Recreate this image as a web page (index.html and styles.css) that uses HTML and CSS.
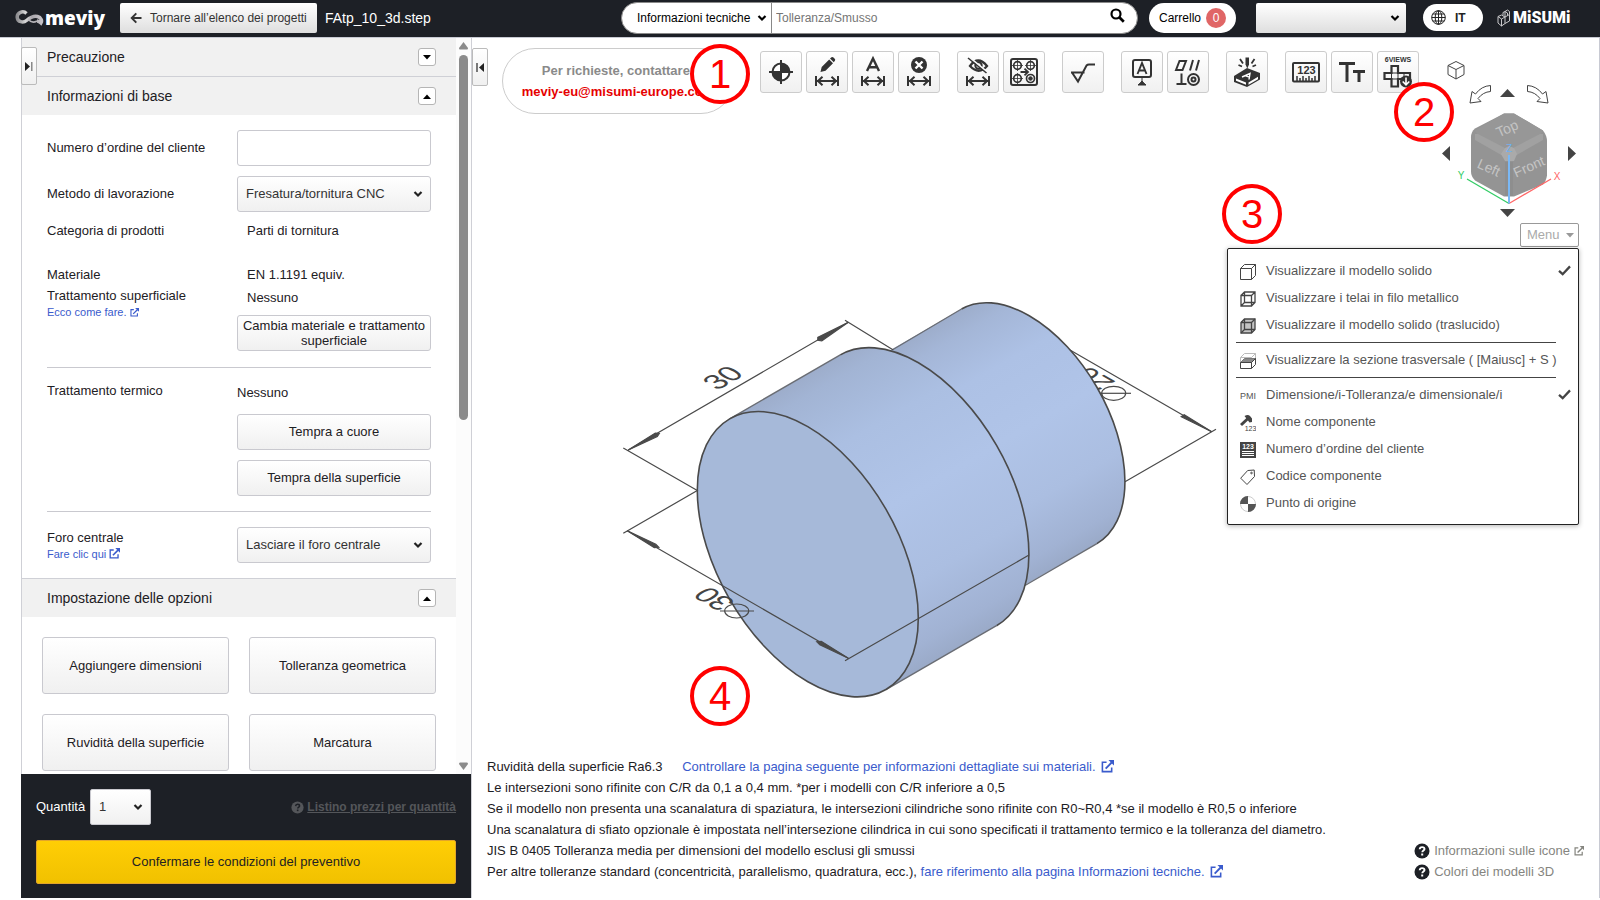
FILE: index.html
```html
<!DOCTYPE html>
<html lang="it">
<head>
<meta charset="utf-8">
<meta name="viewport" content="width=device-width, initial-scale=1">
<title>meviy - FAtp_10_3d.step</title>
<link rel="stylesheet" href="styles.css">
</head>
<body>
<svg class="defs" width="0" height="0" aria-hidden="true">
  <symbol id="chev" viewBox="0 0 10 8"><path d="M1.500 2 5 5.500 8.500 2" fill="none" stroke="currentColor" stroke-width="2.200"/></symbol>
  <symbol id="ext" viewBox="0 0 14 14"><path d="M6 2.500H1.500v10h10V8" fill="none" stroke="currentColor" stroke-width="1.700"/><path d="M5 9.200 11.500 2.700" stroke="currentColor" stroke-width="2"/><path d="M8 0h6v6z" fill="currentColor"/></symbol>
  <symbol id="help" viewBox="0 0 16 16"><circle cx="8" cy="8" r="7.500" fill="currentColor"/><path d="M5.700 6.300c.1-1.500 1.100-2.200 2.400-2.200s2.400.8 2.400 2c0 1.500-2.200 1.500-2.200 3.200" fill="none" stroke="var(--q,#fff)" stroke-width="1.900"/><path d="M7.200 10.500h2v2h-2z" fill="var(--q,#fff)"/></symbol>
  <symbol id="dim" viewBox="0 0 26 12"><path d="M2 1v10M24 1v10M3 6h20M8.500 1.800 4 6l4.500 4.200M17.500 1.800 22 6l-4.500 4.200" fill="none" stroke="currentColor" stroke-width="2"/></symbol>
  <symbol id="check" viewBox="0 0 14 12"><path d="M1 6.500 5 10 13 1.500" fill="none" stroke="currentColor" stroke-width="2.500"/></symbol>
</svg>

<header class="topbar">
  <a class="brand" href="#" aria-label="meviy">
    <svg width="30" height="18" viewBox="0 0 30 18"><defs><linearGradient id="lg" x1="0" x2="1"><stop offset="0" stop-color="#8f8f92"/><stop offset=".35" stop-color="#d8d8d8"/><stop offset=".6" stop-color="#a9a6ac"/><stop offset="1" stop-color="#c4c1c6"/></linearGradient></defs><path d="M11.500 4.500C8 1 1.800 3.500 2.200 8.500c.4 4.500 6 5.700 9.300 3C14.500 9 18.500 6.500 22.500 7.500c3.500 1 5 4 3.500 6.500-1.500-1.500-2.500-2-4-2" fill="none" stroke="url(#lg)" stroke-width="3.400"/><path d="M13.500 10.500c2 2.500 5 3.500 8.500 1.500" fill="none" stroke="#b4b2b6" stroke-width="1.600"/></svg>
    <span>meviy</span>
  </a>
  <button class="back" type="button"><svg width="12" height="12" viewBox="0 0 12 12"><path d="M11.500 6H2M6.300 1.300 1.700 6l4.600 4.700" fill="none" stroke="currentColor" stroke-width="1.900"/></svg>Tornare all’elenco dei progetti</button>
  <span class="filename">FAtp_10_3d.step</span>
  <form class="search">
    <span class="search-kind"><select aria-label="Tipo di ricerca"><option>Informazioni tecniche</option></select><svg class="chev" width="10" height="8"><use href="#chev"/></svg></span>
    <input type="text" aria-label="Cerca" placeholder="Tolleranza/Smusso">
    <button type="button" aria-label="Cerca"><svg width="15" height="15" viewBox="0 0 15 15"><circle cx="6" cy="6" r="4.500" fill="none" stroke="currentColor" stroke-width="2.200"/><path d="m9.300 9.300 4.500 4.500" stroke="currentColor" stroke-width="2.700"/></svg></button>
  </form>
  <a class="cart" href="#">Carrello <b>0</b></a>
  <span class="account"><select aria-label="Account"><option></option></select><svg class="chev" width="10" height="8"><use href="#chev"/></svg></span>
  <button class="lang" type="button"><svg width="15" height="15" viewBox="0 0 15 15" fill="none" stroke="currentColor"><circle cx="7.500" cy="7.500" r="6.800"/><ellipse cx="7.500" cy="7.500" rx="3.300" ry="6.800"/><path d="M7.500.7v13.600M.7 7.500h13.600M1.800 4h11.400M1.800 11h11.400"/></svg>IT</button>
  <a class="misumi" href="#" aria-label="MiSUMi"><svg width="14" height="18" viewBox="0 0 14 18" fill="none" stroke="#c9c9cb"><path d="M1 7.500 4.500 6l3.500 2v6.500L4.500 17 1 14zM1 7.500 4.500 10v7M4.500 10 8 8M8 14.500l4.500-2.500V5.500L8 8M8 8V2.500L10.500 1l2 1.500v3M6 6.500V3.500l2-1M8 2.500l2.500 1.500v2.500"/></svg><span>MiSUMi</span></a>
</header>

<div class="workspace">
  <aside class="sidebar">
    <button class="handle handle-left" type="button" aria-label="Nascondi"><svg width="8" height="9" viewBox="0 0 8 9"><path d="M0 0v9l5-4.500z" fill="#222"/><path d="M6.800 0v9" stroke="#777" stroke-width="1.300"/></svg></button>
    <div class="scroll">
      <div class="panels">
        <section>
          <h2 class="sec-head"><span>Precauzione</span><button type="button" aria-label="Espandi"><svg width="8" height="5" viewBox="0 0 8 5"><path d="M0 0h8L4 4.500z"/></svg></button></h2>
        </section>
        <section>
          <h2 class="sec-head"><span>Informazioni di base</span><button type="button" aria-label="Comprimi"><svg width="8" height="5" viewBox="0 0 8 5"><path d="M0 5h8L4 .5z"/></svg></button></h2>
          <div class="sec-body">
            <div class="row">
              <label for="order">Numero d’ordine del cliente</label>
              <input class="field" id="order" type="text">
            </div>
            <div class="row">
              <label for="method">Metodo di lavorazione</label>
              <span class="select"><select id="method"><option>Fresatura/tornitura CNC</option></select><svg class="chev" width="10" height="8"><use href="#chev"/></svg></span>
            </div>
            <div class="row"><span>Categoria di prodotti</span><span class="value">Parti di tornitura</span></div>
            <div class="row material">
              <div class="stack"><span>Materiale</span><span class="gap-s">Trattamento superficiale</span><a class="small" href="#">Ecco come fare. <svg width="9" height="9"><use href="#ext"/></svg></a></div>
              <div class="stack"><span class="value">EN 1.1191 equiv.</span><span class="value gap-m">Nessuno</span><button class="btn tight" type="button">Cambia materiale e trattamento superficiale</button></div>
            </div>
            <hr>
            <div class="row heat">
              <span>Trattamento termico</span>
              <div class="stack btns"><span>Nessuno</span><button class="btn" type="button">Tempra a cuore</button><button class="btn" type="button">Tempra della superficie</button></div>
            </div>
            <hr>
            <div class="row hole">
              <div class="stack"><label for="hole">Foro centrale</label><a class="small" href="#">Fare clic qui <svg width="11" height="11"><use href="#ext"/></svg></a></div>
              <span class="select"><select id="hole"><option>Lasciare il foro centrale</option></select><svg class="chev" width="10" height="8"><use href="#chev"/></svg></span>
            </div>
          </div>
        </section>
        <section>
          <h2 class="sec-head"><span>Impostazione delle opzioni</span><button type="button" aria-label="Comprimi"><svg width="8" height="5" viewBox="0 0 8 5"><path d="M0 5h8L4 .5z"/></svg></button></h2>
          <div class="options">
            <button class="btn" type="button">Aggiungere dimensioni</button>
            <button class="btn" type="button">Tolleranza geometrica</button>
            <button class="btn" type="button">Ruvidità della superficie</button>
            <button class="btn" type="button">Marcatura</button>
          </div>
        </section>
      </div>
      <div class="scrollbar" aria-hidden="true">
        <svg width="9" height="8" viewBox="0 0 9 8"><path d="M4.500 0 9 6q0 1.500-1 1.500H1Q0 7.500 0 6z"/></svg>
        <span class="thumb"></span>
        <svg class="down" width="9" height="8" viewBox="0 0 9 8"><path d="M4.500 8 9 2Q9 .5 8 .5H1Q0 .5 0 2z"/></svg>
      </div>
    </div>
    <footer class="order">
      <div class="qty">
        <label for="qty">Quantità</label>
        <span class="select qty-select"><select id="qty"><option>1</option></select><svg class="chev" width="10" height="8"><use href="#chev"/></svg></span>
        <a href="#"><svg width="13" height="13"><use href="#help"/></svg><u>Listino prezzi per quantità</u></a>
      </div>
      <button class="confirm" type="button">Confermare le condizioni del preventivo</button>
    </footer>
  </aside>

  <main class="canvas">
    <svg class="model" width="630" height="430" viewBox="600 290 630 430" role="img" aria-label="Modello 3D">
      <defs>
        <linearGradient id="g1" gradientUnits="userSpaceOnUse" x1="729.700" y1="418.800" x2="885.900" y2="689.600"><stop offset="0" stop-color="#9dadcb"/><stop offset=".06" stop-color="#a2b4d4"/><stop offset=".25" stop-color="#abbfe2"/><stop offset=".5" stop-color="#b0c4e8"/><stop offset=".75" stop-color="#abbee1"/><stop offset=".93" stop-color="#a1b2d3"/><stop offset="1" stop-color="#9aaac8"/></linearGradient>
        <linearGradient id="g2" gradientUnits="userSpaceOnUse" x1="961.500" y1="309" x2="1096.900" y2="543.600"><stop offset="0" stop-color="#9dadcb"/><stop offset=".08" stop-color="#a4b6d7"/><stop offset=".25" stop-color="#adc1e5"/><stop offset=".5" stop-color="#b0c4e8"/><stop offset=".75" stop-color="#abbee1"/><stop offset=".93" stop-color="#a1b2d3"/><stop offset="1" stop-color="#9aaac8"/></linearGradient>
      </defs>
      <g class="ink">
        <path d="M1070 350 1211.700 431.700M1125 481.700 1216 429.300"/>
        <path class="fill" d="m1211.700 431.700-30.500-15 3-2z"/>
        <ellipse cx="1113.700" cy="393.300" rx="12" ry="7"/><path d="M1100 393.300h31"/>
      </g>
      <text class="dimtext" transform="matrix(-.866 -.5 .866 -.5 1094 379)" y="10">26</text>
      <path d="M850.700 373 961.500 309A135.400 78.200 60 0 1 1096.900 543.600L986.100 607.600z" fill="url(#g2)"/>
      <path class="edge" d="M961.500 309A135.400 78.200 60 0 1 1096.900 543.600"/>
      <path class="rim" d="M893 349.500 961.500 309M1025 585.500 1096.900 543.600"/>
      <path d="M729.700 418.800 840.300 354.900A156.300 90.200 60 0 1 996.500 625.700L885.900 689.600z" fill="url(#g1)"/>
      <path class="edge" d="M840.300 354.900A156.300 90.200 60 0 1 996.500 625.700"/>
      <path class="rim" d="M729.700 418.800 840.300 354.900M885.900 689.600 996.500 625.700"/>
      <ellipse class="edge face" cx="807.800" cy="554.200" rx="156.300" ry="90.200" transform="rotate(60 807.800 554.200)"/>
      <g class="ink">
        <path d="M628.300 450 848.300 322.300M623.300 448 697.300 490.500 623.300 533.300M845 320.300 893.300 350M627.300 530.700 848.300 658.300M845 660.700 1029 555"/>
        <path class="fill" d="m628.300 450 27-17 4 .5-2 3zM848.300 322.300l-30.500 15v3l4 .5zM627.300 530.700l27 17 4.500-.5-3-3zM848.300 658.300l-27-17-4.500.5 3 3z"/>
        <ellipse cx="736.700" cy="611" rx="12" ry="7"/><path d="M720 611h34"/>
      </g>
      <text class="dimtext" transform="matrix(.866 -.5 .866 .5 722.700 377.700)" y="10">30</text>
      <text class="dimtext" transform="matrix(-.866 -.5 .866 -.5 714 599)" y="10">30</text>
    </svg>

    <div class="canvas-top">
      <button class="handle" type="button" aria-label="Nascondi"><svg width="8" height="9" viewBox="0 0 8 9"><path d="M8 0v9L3 4.500z" fill="#222"/><path d="M1 0v9" stroke="#333" stroke-width="1.300"/></svg></button>
      <div class="contact"><span>Per richieste, contattare:</span><a href="#">meviy-eu@misumi-europe.com</a></div>
      <div class="toolbar">
        <div class="group">
          <button type="button" aria-label="Origine"><svg width="36" height="36" viewBox="0 0 36 36"><circle cx="18" cy="18" r="8.500" fill="#fff" stroke="#333" stroke-width="2"/><path d="M18 18V9.500A8.500 8.500 0 0 1 26.500 18zM18 18v8.500A8.500 8.500 0 0 1 9.500 18z"/><path d="M18 6v24M6 18h24" stroke="#333" stroke-width="2"/></svg></button>
          <button type="button" aria-label="Modifica quota"><svg width="36" height="36" viewBox="0 0 36 36"><path d="m11.500 18 1.200-5 7.500-7.500 3.800 3.800-7.500 7.500zM21 4.500l1.500-1.200q1-.7 2 .3l1.200 1.200q1 1 .2 2L24.800 8.300z"/><use href="#dim" x="5" y="21" width="26" height="12"/></svg></button>
          <button type="button" aria-label="Testo quota"><svg width="36" height="36" viewBox="0 0 36 36"><path d="M12 17 18 4.500 24 17M14.500 13.200h7" fill="none" stroke="#333" stroke-width="2.400"/><use href="#dim" x="5" y="21" width="26" height="12"/></svg></button>
          <button type="button" aria-label="Elimina quota"><svg width="36" height="36" viewBox="0 0 36 36"><circle cx="18" cy="11" r="8"/><path d="m14.500 7.500 7 7m0-7-7 7" stroke="#fff" stroke-width="2.400"/><use href="#dim" x="5" y="21" width="26" height="12"/></svg></button>
        </div>
        <div class="group">
          <button type="button" aria-label="Nascondi quota"><svg width="36" height="36" viewBox="0 0 36 36"><path d="M10 12q8-11 17 0-8 9.500-17 0z" fill="none" stroke="#333" stroke-width="2.300"/><circle cx="18.500" cy="11.500" r="3.200" fill="none" stroke="#333" stroke-width="2"/><path d="m9.500 3.500 17 14" stroke="#fafafa" stroke-width="2"/><path d="m8 4 18.500 15" stroke="#333" stroke-width="1.600"/><use href="#dim" x="5" y="21" width="26" height="12"/></svg></button>
          <button type="button" aria-label="Fori"><svg width="36" height="36" viewBox="0 0 36 36" fill="none" stroke="#333"><rect x="5" y="5" width="26" height="26" rx="2" stroke-width="2"/><g stroke-width="1.700"><circle cx="11.500" cy="11.500" r="3.800"/><circle cx="24.500" cy="11.500" r="3.800"/><circle cx="11.500" cy="24.500" r="3.800"/><circle cx="24.500" cy="24.500" r="4"/></g><path d="M11.500 6v11M6 11.500h11M24.500 6v11M19 11.500h11M11.500 19v11M6 24.500h11" stroke-width=".8"/><circle cx="24.500" cy="24.500" r="1.800" fill="#333"/><path d="M14.500 18h7M18.500 14.700 22 18l-3.500 3.300" stroke-width="1.800"/></svg></button>
        </div>
        <div class="group">
          <button type="button" aria-label="Rugosità"><svg width="36" height="36" viewBox="0 0 36 36"><path d="M6 18.500h13.500M7 18.500l6 9 8.500-16q1-1 2.500-1h6" fill="none" stroke="#333" stroke-width="2"/></svg></button>
        </div>
        <div class="group">
          <button type="button" aria-label="Riferimento"><svg width="36" height="36" viewBox="0 0 36 36"><rect x="9" y="6" width="18" height="17" rx="2" fill="none" stroke="#333" stroke-width="2"/><path d="m13.500 20 4.500-11 4.500 11M15 16.500h6" fill="none" stroke="#333" stroke-width="1.900"/><path d="M18 23v5M14 31q2-1.500 4-4 2 2.500 4 4z" stroke="#333"/></svg></button>
          <button type="button" aria-label="Tolleranza geometrica"><svg width="36" height="36" viewBox="0 0 36 36" fill="none" stroke="#333" stroke-width="2"><path d="m6 16 3.500-9H16l-3.500 9zM20 16.500 23 6M26 16.500 29 6M11.500 19.500v10M6.500 30h10"/><circle cx="23.500" cy="25.500" r="5.500"/><circle cx="23.500" cy="25.500" r="2"/></svg></button>
        </div>
        <div class="group">
          <button type="button" aria-label="Marcatura"><svg width="36" height="36" viewBox="0 0 36 36"><path d="m5 22 13-8 13 5v6.500L18 33 5 28z"/><path d="m7 24.500 10 4v2.300L7 26.800zM19.500 28.500l9.500-5.800v2.500l-9.500 5.500z" fill="#fff"/><path d="m13 23 8-3.500-1 6M16 21.600l5 1.700" fill="none" stroke="#fff" stroke-width="1.400"/><path d="M16.500 3.500h3.500v7l-1.700 4-1.800-4z"/><path d="m11 5 3 4.500M25.500 5l-3 4.500M9.500 11l3.500 1.500M27 11l-3.500 1.500" stroke="#333" stroke-width="1.800"/></svg></button>
        </div>
        <div class="group">
          <button type="button" aria-label="Misura"><svg width="36" height="36" viewBox="0 0 36 36"><rect x="5" y="9" width="26" height="18.500" rx="1" fill="none" stroke="#333" stroke-width="2"/><path d="M9 27v-5M12 27v-3M15 27v-5M18 27v-3M21 27v-5M24 27v-3M27 27v-5" stroke="#333" stroke-width="1.500"/><text x="18.500" y="20" font-size="11" font-weight="700" text-anchor="middle">123</text></svg></button>
          <button type="button" aria-label="Testo"><svg width="36" height="36" viewBox="0 0 36 36"><path d="M5 9.500h16M13 9.500V28M19 17.500h12M25 17.500V28" fill="none" stroke="#333" stroke-width="3"/></svg></button>
          <button type="button" aria-label="6 viste"><svg width="36" height="36" viewBox="0 0 36 36"><text x="18" y="8" font-size="7" font-weight="700" text-anchor="middle">6VIEWS</text><path d="M11.500 12h6.500v7h12v6h-12v7.500h-6.500V25h-7v-6h7z" fill="none" stroke="#333" stroke-width="2.200"/><path d="M11.500 19H18v6h-6.500zM24 19v6" fill="none" stroke="#333"/><circle cx="26" cy="27.500" r="6"/><path d="M26 23.500v6.500M22.700 27.500l3.300 3.300 3.300-3.300" fill="none" stroke="#fff" stroke-width="1.600"/></svg></button>
        </div>
      </div>
      <div class="view">
        <svg class="viewcube" width="150" height="165" viewBox="1440 55 150 165" role="img" aria-label="Cubo di orientamento">
          <g fill="none" stroke="#444"><path d="m1456 61.500 8 4v9l-8 4.500-8-4.500v-9zM1448 65.500l8 4 8-4M1456 69.500v9.500"/>
          <path d="M1490.500 85.500q-9 .5-15 8.500l-3.500-2.500-2 11.500 11-1.500-3-3q5-6.500 12.500-7zM1527.500 85.500q9 .5 15 8.500l3.500-2.500 2 11.500-11-1.500 3-3q-5-6.500-12.500-7z"/></g>
          <path fill="#444" d="M1500 97h15l-7.500-8zM1500 209h15l-7.500 8zM1450 146v15l-8-7.500zM1568 146v15l8-7.500z"/>
          <path fill="#949494" d="M1504 113.500h10l29 17q4 5 4 11v34q-1 6-4 9l-29 12h-10l-29-16q-4-4-4-9v-34q0-6 4-9z"/>
          <path fill="#979797" d="m1504 113.500h10l29 17-3 5-26 12-5-2-5 2-26-12-3-5z"/>
          <path fill="#a1a1a1" d="m1475 134 3 0 27 14-2 8-28-16zM1543 134l-3 0-27 14 2 8 28-16z"/>
          <path fill="#8e8e8e" d="M1505 162h8v34h-8z"/>
          <path fill="#aaa" d="m1505 148 4-2 5 2 3 6-3 7h-9l-4-7z"/>
          <g class="cubetext"><text transform="translate(1509 133) rotate(-24)">Top</text><text transform="translate(1487 172) rotate(24)">Left</text><text transform="translate(1531 171) rotate(-24)">Front</text></g>
          <g fill="none" stroke-width="1.300"><path stroke="#33cc66" d="m1509 203.500-42-24.500"/><path stroke="#f66" d="m1509 203.500 42-24.500"/><path stroke="#7ab8f5" stroke-width="2" d="M1509 203.500V155"/></g>
          <g class="axis"><text x="1461" y="179" fill="#33cc66">Y</text><text x="1557" y="180" fill="#f66">X</text><text x="1509" y="152" fill="#6fb1f3">Z</text></g>
        </svg>
        <div class="menu-wrap">
          <button class="menu-btn" type="button">Menu<svg width="8" height="5" viewBox="0 0 8 5"><path d="M0 0h8L4 4.500z" fill="#999"/></svg></button>
          <div class="menu">
            <button type="button"><svg width="16" height="16" viewBox="0 0 16 16"><path d="M.5 4.500h11v11H.5zM.5 4.500l4-4h11v11l-4 4M11.500 4.500l4-4"/></svg>Visualizzare il modello solido<svg class="tick" width="13" height="11"><use href="#check"/></svg></button>
            <button type="button"><svg width="16" height="16" viewBox="0 0 16 16"><path stroke-width="1.300" d="M1 4.500h10.500V15H1zM1 4.500 4.500 1H15v10.500L11.500 15M11.500 4.500 15 1M4.500 1v10.500H15M4.500 11.500 1 15"/></svg>Visualizzare i telai in filo metallico</button>
            <button type="button"><svg width="16" height="16" viewBox="0 0 16 16"><path fill="#c4c4c4" stroke-width="1.300" d="M1 4.500 4.500 1H15v10.500L11.500 15H1z"/><path stroke-width="1.300" d="M1 4.500h10.500V15M11.500 4.500 15 1M4.500 1v10.500H15M4.500 11.500 1 15"/></svg>Visualizzare il modello solido (traslucido)</button>
            <hr>
            <button type="button"><svg width="16" height="16" viewBox="0 0 16 16"><path stroke="#bbb" d="M.5 9V4.500l4-4h11v5M.5 4.500h11l4-4M11.500 4.500V9"/><path fill="#888" stroke="#777" d="m.5 9.500 4-4h11l-4 4z"/><path d="M.5 9.500h11v6H.5zM15.500 5.500v6l-4 4M11.500 9.500l4-4"/></svg>Visualizzare la sezione trasversale ( [Maiusc] + S )</button>
            <hr>
            <button type="button"><span class="pmi">PMI</span>Dimensione/i-Tolleranza/e dimensionale/i<svg class="tick" width="13" height="11"><use href="#check"/></svg></button>
            <button type="button"><svg width="16" height="16" viewBox="0 0 16 16"><path d="m1 10 7-6.500" stroke-width="3"/><path fill="#444" stroke="none" d="M4.500 1Q8-1 10 1l2 2.500V7L9.500 7.500 8 5.500z"/><text x="10.500" y="16" font-size="7" text-anchor="middle" stroke="none" fill="#444">123</text></svg>Nome componente</button>
            <button type="button"><svg width="16" height="16" viewBox="0 0 16 16"><path fill="#444" stroke="none" d="M0 0h16v16H0z"/><path stroke="#fff" d="M2 9.500h12M2 11.500h12M2 13.500h12"/><text x="8" y="7" font-size="7" font-weight="700" text-anchor="middle" stroke="none" fill="#fff">123</text></svg>Numero d’ordine del cliente</button>
            <button type="button"><svg width="16" height="16" viewBox="0 0 16 16"><path d="m.7 9.200 7-7.700 6.500-.5.3 6.500-7.500 8z"/><circle cx="11.500" cy="4" r=".8"/></svg>Codice componente</button>
            <button type="button"><svg width="16" height="16" viewBox="0 0 16 16"><circle cx="8" cy="8" r="7.500" fill="#fff" stroke="#ccc"/><path fill="#555" stroke="none" d="M8 8V0A8 8 0 0 0 0 8zM8 8v8a8 8 0 0 0 8-8z"/></svg>Punto di origine</button>
          </div>
        </div>
      </div>
    </div>

    <div class="notes">
      <div>
        <p>Ruvidità della superficie Ra6.3 <a class="lead" href="#">Controllare la pagina seguente per informazioni dettagliate sui materiali. <svg width="13" height="13"><use href="#ext"/></svg></a></p>
        <p>Le intersezioni sono rifinite con C/R da 0,1 a 0,4 mm. *per i modelli con C/R inferiore a 0,5</p>
        <p>Se il modello non presenta una scanalatura di spaziatura, le intersezioni cilindriche sono rifinite con R0~R0,4 *se il modello è R0,5 o inferiore</p>
        <p>Una scanalatura di sfiato opzionale è impostata nell’intersezione cilindrica in cui sono specificati il trattamento termico e la tolleranza del diametro.</p>
        <p>JIS B 0405 Tolleranza media per dimensioni del modello esclusi gli smussi</p>
        <p>Per altre tolleranze standard (concentricità, parallelismo, quadratura, ecc.), <a href="#">fare riferimento alla pagina Informazioni tecniche. <svg width="13" height="13"><use href="#ext"/></svg></a></p>
      </div>
      <div class="legend">
        <a href="#"><svg width="16" height="16"><use href="#help"/></svg>Informazioni sulle icone<svg class="mini" width="10" height="10"><use href="#ext"/></svg></a>
        <a href="#"><svg width="16" height="16"><use href="#help"/></svg>Colori dei modelli 3D</a>
      </div>
    </div>

    <span class="mark m1">1</span>
    <span class="mark m2">2</span>
    <span class="mark m3">3</span>
    <span class="mark m4">4</span>
  </main>
</div>
</body>
</html>
```

FILE: styles.css
```css
* { box-sizing: border-box; }
body {
  margin: 0;
  height: 100vh;
  padding-bottom: 2px;
  display: flex;
  flex-direction: column;
  background: #fff;
  color: #1d2024;
  font: 13px/18px "Liberation Sans", Arial, sans-serif;
}
button, select, input { font: inherit; color: inherit; margin: 0; }
a { color: #3a5bcc; text-decoration: none; }
svg { flex: none; }
.defs { position: absolute; }
select { appearance: none; width: 100%; height: 100%; border: 0; background: none; padding: 0 8px; }
.chev { position: absolute; right: 7px; top: 50%; margin-top: -4px; pointer-events: none; }

/* top bar */
.topbar {
  flex: none;
  display: flex;
  align-items: center;
  height: 38px;
  padding: 0 29px 2px 15px;
  background: #1d2026;
  border-bottom: 1px solid #c8cad3;
  color: #fff;
}
.brand { display: flex; align-items: center; width: 105px; color: #fff; }
.brand span { font: 800 19px/26px "Open Sans", sans-serif; }
.back {
  display: flex;
  align-items: center;
  gap: 8px;
  height: 30px;
  width: 197px;
  padding: 0 10px;
  border: 0;
  border-radius: 2px;
  background: linear-gradient(#fff, #dedede);
  color: #333;
  font-size: 12px;
  white-space: nowrap;
}
.filename { margin-left: 8px; font-size: 14px; }
.search {
  display: flex;
  margin-left: auto;
  width: 517px;
  height: 32px;
  border: 1px solid #8a8a8a;
  border-radius: 16px;
  background: #fff;
  color: #000;
  overflow: hidden;
  font-size: 12px;
}
.search-kind { position: relative; width: 150px; border-right: 1px solid #888; }
.search-kind select { padding-left: 15px; }
.search-kind .chev { right: 4px; }
.search input { flex: 1; min-width: 0; border: 0; padding: 0 4px; outline: 0; }
.search input::placeholder { color: #757575; }
.search button { width: 40px; border: 0; padding: 0; background: none; }
.cart {
  display: flex;
  align-items: center;
  gap: 5px;
  margin-left: 11px;
  width: 87px;
  height: 30px;
  padding: 0 10px;
  border-radius: 15px;
  background: #fff;
  color: #000;
  font-size: 12px;
}
.cart b { flex: none; width: 20px; height: 20px; border-radius: 10px; background: #e06666; color: #fff; text-align: center; font: 12px/20px "Liberation Sans", sans-serif; }
.account { position: relative; width: 150px; height: 30px; margin-left: 20px; border-radius: 2px; background: linear-gradient(#fff, #dedede); color: #000; }
.account .chev { right: 6px; }
.lang { display: flex; align-items: center; gap: 9px; width: 60px; height: 27px; margin-left: 17px; padding: 0 8px; border: 0; border-radius: 14px; background: #fff; color: #222; font-weight: 700; font-size: 12px; }
.misumi { display: flex; align-items: center; gap: 2px; margin-left: 14px; width: 74px; color: #fff; }
.misumi span { font: 900 16px/20px Roboto, sans-serif; }

/* sidebar */
.workspace { flex: 1; min-height: 0; display: flex; padding-left: 21px; }
.sidebar { position: relative; flex: none; width: 451px; display: flex; flex-direction: column; border: 1px solid #cfd0d6; border-width: 0 1px; }
.handle { flex: none; display: grid; place-items: center; width: 16px; height: 38px; padding: 0; border: 1px solid #bbb; border-radius: 2px; background: linear-gradient(#fff, #f0f0f0); }
.handle-left { position: absolute; left: -1px; top: 9px; z-index: 1; }
.scroll { flex: 1; min-height: 0; display: flex; overflow: hidden; }
.panels { flex: 1; overflow: hidden; }
.sec-head { display: flex; align-items: center; justify-content: space-between; height: 39px; margin: 0; padding: 0 20px 0 25px; border-top: 1px solid #cfd0d6; background: #f1f1f1; font-size: 14px; font-weight: 400; }
section:first-child .sec-head { height: 38px; border-top: 0; }
.sec-head button { display: grid; place-items: center; width: 18px; height: 18px; padding: 0; border: 1px solid #b5b5b5; border-radius: 3px; background: #fff; }
.scrollbar { display: flex; flex-direction: column; align-items: center; width: 15px; padding: 4px 0; background: #fcfcfc; fill: #8b8b8b; }
.thumb { width: 9px; height: 365px; margin-top: 5px; border-radius: 5px; background: #8b8b8b; }
.down { margin-top: auto; }
.sec-body { padding: 15px 25px; }
.row { display: grid; grid-template-columns: 190px 1fr; align-items: center; margin-bottom: 10px; }
.field, .select { height: 36px; width: 100%; border: 1px solid #c9c9cf; border-radius: 3px; }
.select { position: relative; background: linear-gradient(#fff, #f0f0f0); color: #333; }
.select .chev { color: #222; }
.value { padding-left: 10px; }
.stack { display: flex; flex-direction: column; }
.row.material { align-items: start; margin: 26px 0 16px; }
.gap-s { margin-top: 3px; }
.gap-m { margin: 5px 0 8px; }
.small { font-size: 11px; line-height: 14px; }
.small svg { vertical-align: -1px; }
.btn { height: 36px; padding: 0 4px; border: 1px solid #c9c9cf; border-radius: 3px; background: linear-gradient(#fff, #f0f0f0); }
.tight { line-height: 15px; }
hr { margin: 0; border: 0; border-top: 1px solid #c9c9cf; }
.row.heat { align-items: start; margin: 14px 0 15px; }
.btns { gap: 10px; padding-top: 2px; }
.btns span { margin-bottom: 2px; }
.row.hole { margin: 15px 0 0; }
.options { display: grid; grid-template-columns: 1fr 1fr; gap: 20px; padding: 20px; }
.options .btn { height: 57px; }
.order { flex: none; margin-left: -1px; padding: 15px 15px 14px; background: #1d2026; color: #fff; }
.qty { display: flex; align-items: center; margin-bottom: 15px; }
.qty label { width: 54px; }
.qty-select { width: 61px; border-radius: 2px; }
.qty a { display: flex; align-items: center; gap: 3px; margin-left: auto; color: #54565a; font-size: 12px; font-weight: 700; --q: #1d2026; }
.confirm { width: 100%; height: 44px; border: 1px solid #e2a52a; border-radius: 2px; background: linear-gradient(#ffce05, #f1c100); color: #222; }

/* canvas */
.canvas { position: relative; flex: 1; min-width: 0; display: flex; flex-direction: column; justify-content: space-between; border-right: 1px solid #c8cad3; }
.model { position: absolute; left: 128px; top: 252px; }
.ink { fill: none; stroke: #4a4a4a; stroke-width: 1.2; }
.ink .fill { fill: #4a4a4a; }
.edge { fill: none; stroke: #4a4a4a; stroke-width: 1.6; }
.face { fill: #a6b9d9; }
.rim { fill: none; stroke: #6a6d74; stroke-width: 1.4; }
.dimtext { font-size: 29px; text-anchor: middle; fill: #444; }
.canvas-top { position: relative; display: flex; align-items: flex-start; padding-top: 10px; }
.contact { display: flex; flex-direction: column; align-items: center; justify-content: center; flex: none; width: 232px; height: 66px; margin-left: 14px; border: 1px solid #ccc; border-radius: 33px; color: #8a8a8a; font-weight: 700; line-height: 21px; }
.contact a { color: #e60000; }
.toolbar { display: flex; gap: 17px; margin: 3px 0 0 26px; }
.group { display: flex; gap: 4px; }
.group button { display: grid; place-items: center; width: 42px; height: 42px; padding: 0; border: 1px solid #ccc; border-radius: 3px; background: linear-gradient(#fff, #f0f0f0); fill: #333; color: #333; }
.view { display: flex; flex-direction: column; align-items: flex-end; margin: 7px 9px 0 auto; }
.viewcube { display: block; }
.cubetext { font-size: 14px; text-anchor: middle; fill: #c4c4c4; }
.axis { font-size: 10px; text-anchor: middle; }
.menu-wrap { position: relative; margin: 3px 11px 0 0; }
.menu-btn { display: flex; align-items: center; justify-content: space-between; width: 59px; height: 24px; padding: 0 4px 0 6px; border: 1px solid #999; border-radius: 2px; background: #fff; color: #aaa; }
.menu { position: absolute; top: 25px; right: 0; width: 352px; padding: 8px; border: 1px solid #222; border-radius: 2px; background: #fff; box-shadow: 0 1px 5px rgba(0, 0, 0, .3); color: #555; }
.menu button { display: flex; align-items: center; gap: 10px; width: 100%; height: 27px; padding: 0 0 0 4px; border: 0; background: none; white-space: nowrap; }
.menu button > svg { fill: none; stroke: #444; margin-top: 2px; }
.menu .tick { margin: 0 -1px 0 auto; stroke: none; color: #444; }
.menu hr { margin: 4px 14px 3px 0; border-top-color: #444; }
.pmi { width: 16px; font-size: 9px; margin-top: 3px; }
.notes { position: relative; display: flex; justify-content: space-between; align-items: flex-end; padding: 0 15px 16px; line-height: 21px; }
.notes p { margin: 0; }
.notes svg { vertical-align: -2px; }
.notes p svg { margin-left: 2px; }
.lead { margin-left: 16px; }
.legend a { display: flex; align-items: center; gap: 4px; color: #85857f; }
.legend svg { color: #1d2026; }
.legend .mini { color: #85857f; }
.mark { position: absolute; width: 60px; height: 60px; border: 4px solid #f00; border-radius: 30px; background: #fff; color: #f00; font-size: 40px; line-height: 52px; text-align: center; }
.m1 { left: 218px; top: 6px; }
.m2 { right: 145px; top: 44px; }
.m3 { right: 317px; top: 146px; }
.m4 { left: 218px; top: 628px; }
```
